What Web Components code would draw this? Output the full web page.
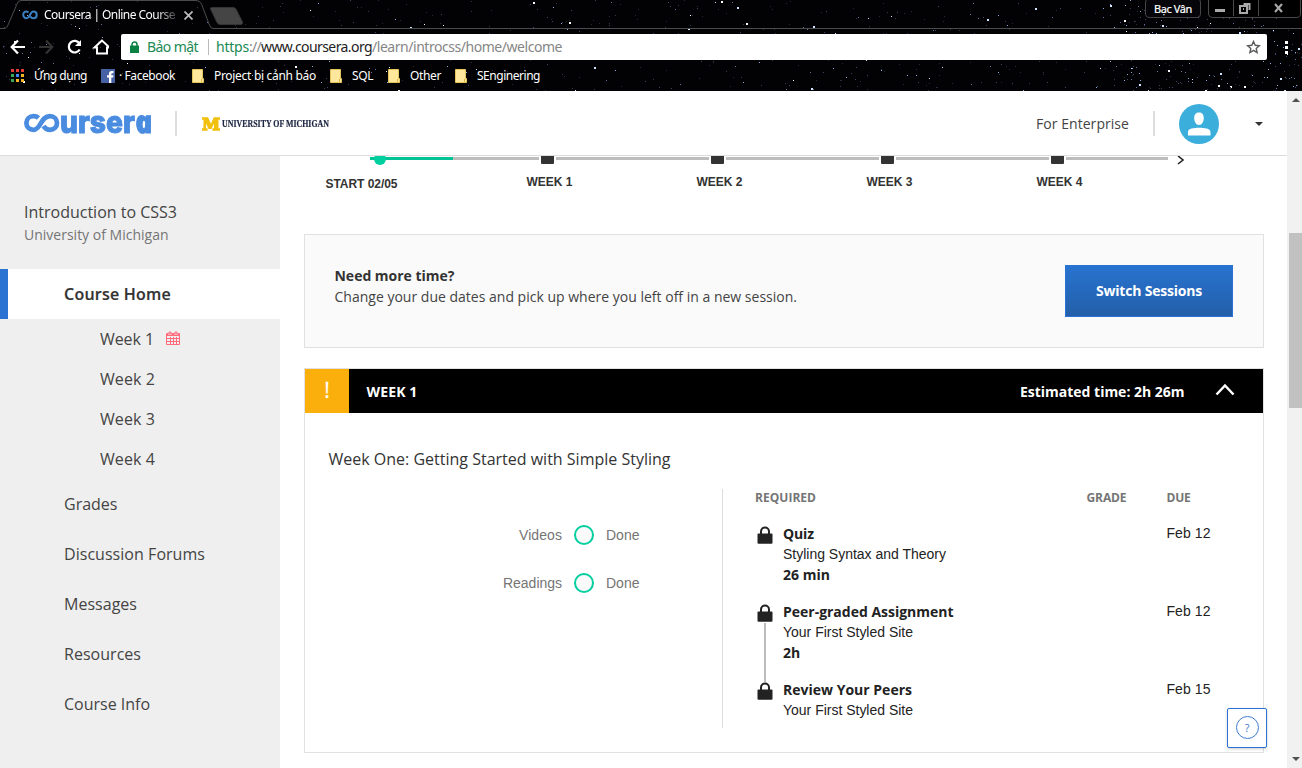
<!DOCTYPE html>
<html lang="vi"><head><meta charset="utf-8"><title>Coursera | Online Courses</title>
<style>
html,body{margin:0;height:100%;overflow:hidden;background:#fff}
body{font-family:"Open Sans","Noto Sans",sans-serif;color:#333}
</style></head><body>
<course-app></course-app>
<script>
function el(name, html, init){
  const t=document.createElement('template'); t.innerHTML=html;
  customElements.define(name, class extends HTMLElement{
    constructor(){super();this.attachShadow({mode:'open'}).append(t.content.cloneNode(true));}
    connectedCallback(){ if(init&&!this.ready){this.ready=true;init.call(this,this.shadowRoot);} }
  });
}
el('course-app', `<style>
:host{display:grid;grid-template-rows:91px 65px 612px;grid-template-columns:280px 1007px 15px;width:1302px;height:768px}
browser-chrome{grid-column:1/4}
site-header{grid-column:1/3}
scroll-rail{grid-column:3;grid-row:2/4}
main{height:612px;overflow:hidden;display:flex;flex-direction:column}
session-notice{margin:0 23px 20px 24px}week-card{margin:0 23px 0 24px}
help-button{position:absolute;left:1227px;top:708px}
</style>
<browser-chrome></browser-chrome><site-header></site-header><scroll-rail></scroll-rail>
<course-sidebar></course-sidebar>
<main><progress-timeline></progress-timeline><session-notice></session-notice><week-card></week-card></main>
<help-button></help-button>`);

el('browser-chrome', `<style>
:host{display:grid;grid-template:91px/1302px;background:#020204;color:#fff;overflow:hidden}
star-field,.rows{grid-area:1/1}
.rows{display:grid;grid-template-rows:29px 37px 25px;z-index:1}
</style><star-field></star-field><div class="rows"><tab-strip></tab-strip><address-row></address-row><bookmark-bar></bookmark-bar></div>`);

el('star-field', `<style>:host,svg{display:block;width:1302px;height:91px}</style><svg viewBox="0 0 1302 91" shape-rendering="crispEdges"></svg>`, function(r){
  let s=20117; const n=()=>(s=(s*1103515245+12345)%2147483648)/2147483648;
  const c=['#26283c','#34384c','#3f4668','#6274a0','#8fabdc','#cfe4ff','#ffffff']; let o='';
  for(let i=0;i<900;i++){
    const right=n()<.36, x=right?1110+Math.floor(n()*192):Math.floor(n()*1130), y=Math.floor(n()*91);
    const k=Math.floor(n()*(right?.4+n()*.6:n())*8), h=k>4&&n()<.5?2:1;
    o+='<rect x="'+x+'" y="'+y+'" width="'+h+'" height="'+h+'" fill="'+c[Math.min(k,6)]+'"/>';
  }
  r.querySelector('svg').innerHTML=o;
});

el('tab-strip', `<style>
:host{display:grid;grid-template:29px/1302px;font:12px "Noto Sans","Open Sans",sans-serif}
svg{display:block}.bg,.row{grid-area:1/1}
.row{display:flex;height:29px}
.mark{margin:9px 0 0 22px}
.t{margin:6px 0 0 6px;line-height:17px;width:131px;-webkit-mask:linear-gradient(90deg,#000 112px,#0004)}
.x{margin:11px 0 0 9px}
.user{margin:-2px 0 0 952px;width:54px;height:18px;border:1px solid #444;border-radius:4px;display:flex;justify-content:center;line-height:20px;box-sizing:content-box;font-size:11px;background:#05050a;color:#fff;-webkit-text-stroke:.2px #fff}
.win{margin-left:7px}
</style>
<svg class="bg" width="1302" height="29" fill="none" stroke="#4a4c4c"><path d="M0 28.500H5Q7 28 8 25L17 4Q18 .5 21 .5H196Q200 .5 201.500 4L209 24Q210.500 28.500 213 28.500H1302"/><path d="M211.500 7.500H233Q235 7.500 236 9L242.500 22Q243 24.500 241 24.500H220Q218 24.500 217 22.500L210.500 9Q210 7.500 211.500 7.500Z" fill="#454545" stroke="#333"/></svg>
<div class="row">
<svg class="mark" width="16" height="12" fill="none" stroke="#3c80c2" stroke-width="2"><path d="M6.500 3.400C3.500 1.300 1.200 3.300 1.200 5.800C1.200 8.500 4 10.300 6.500 8.300C8.500 6.500 8.500 2.500 11.300 2.500C13.500 2.500 14.700 4 14.700 5.900C14.700 8 13.200 9.300 11.300 9.300C10 9.300 9 8.600 8.500 7.500"/></svg>
<fit-text class="t" w="131">Coursera | Online Course</fit-text>
<svg class="x" width="9" height="9" stroke="#bbb" stroke-width="1.700"><path d="M.5 .5l8 8M8.500 .5l-8 8"/></svg>
<div class="user"><fit-text w="38">Bạc Vân</fit-text></div>
<svg class="win" width="94" height="18" fill="none" stroke="#4a4a4a"><path fill="#000" d="M.5 0V14Q1 17.500 4.500 17.500H88Q92.500 17.500 92.500 14V0M25.500 0V16M50.500 0V16"/><path stroke="#aaa" stroke-width="3" d="M7 10.500H17"/><path stroke="#aaa" stroke-width="2" d="M32 6h7v7h-7zM35.500 4H41.500V10M35 9h1"/><path stroke="#aaa" stroke-width="2" d="M67 4l7 8M74 4l-7 8"/></svg>
</div>`);

el('address-row', `<style>
:host{display:flex;height:37px;padding-top:5px;box-sizing:border-box;font:14px "Noto Sans","Open Sans",sans-serif}
svg{display:block;flex:none}
.nav{margin-right:12px}
.box{display:flex;width:1146px;height:26px;background:#fff;border-radius:2px;line-height:26px;color:#868686}
.box>*{flex:none}
.lock{margin:7px 0 0 9px}.safe{margin-left:8px;color:#218a54}.sep{width:1px;height:16px;background:#bbb;margin:5px 7px 0 10px}
.g{color:#218a54}.k{color:#222}.star{margin:6px 0 0 684px}.dots{margin:7px 0 0 18px}
</style>
<svg class="nav" width="109" height="26" fill="none" stroke="#fff" stroke-width="2.200"><path d="M25 13H12M18 6.500L11.700 13L18 19.500"/><path stroke="#333" d="M39 13H52M46 6.500L52.300 13L46 19.500"/><path d="M79.500 9.500A5.800 5.800 0 1 0 79.700 15.500"/><path d="M81 6V12H75Z" fill="#fff" stroke="none"/><path d="M102 6.500L94.500 13.500H97V19.500H107V13.500H109.500L102 6.500Z" stroke-width="2"/></svg>
<div class="box">
<svg class="lock" width="9" height="12"><path d="M2 5V3.500a2.500 2.500 0 0 1 5 0V5" fill="none" stroke="#0b8043" stroke-width="1.500"/><path fill="#0b8043" d="M0 4.500h9V12H0z"/></svg>
<fit-text class="safe" w="51">Bảo mật</fit-text><span class="sep"></span>
<fit-text class="g" w="33">https</fit-text><fit-text w="12">://</fit-text><fit-text class="k" w="111">www.coursera.org</fit-text><fit-text w="190">/learn/introcss/home/welcome</fit-text>
<svg class="star" width="15" height="14" fill="none" stroke="#5a5a5a" stroke-width="1.400"><path d="M7.500 1.500L9.200 5.300L13.300 5.700L10.200 8.400L11.100 12.500L7.500 10.400L3.900 12.500L4.800 8.400L1.700 5.700L5.800 5.300Z"/></svg>
</div>
<svg class="dots" width="4" height="14" fill="#fff"><path d="M0 0h3v3H0zM0 5h3v3H0zM0 10h3v3H0z"/></svg>`);

el('bookmark-bar', `<style>:host{display:flex;height:25px;padding-left:11px;font:12px/20px "Noto Sans","Open Sans",sans-serif}</style>
<book-mark kind="apps" w="53" gap="10" end="14">Ứng dụng</book-mark>
<book-mark kind="fb" w="56" gap="4" end="17">· Facebook</book-mark>
<book-mark kind="folder" w="102" gap="10" end="14">Project bị cảnh báo</book-mark>
<book-mark kind="folder" w="21" gap="10" end="15">SQL</book-mark>
<book-mark kind="folder" w="31" gap="10" end="14">Other</book-mark>
<book-mark kind="folder" w="63" gap="10" end="0">SEnginering</book-mark>`);
const icons={
 apps:'<svg width="13" height="14"><path fill="#e53b35" d="M0 0h3v3H0zM5 0h3v3H5zM10 0h3v3h-3z"/><path fill="#37a853" d="M0 5h3v3H0zM0 10h3v3H0z"/><path fill="#3f8bf5" d="M5 5h3v3H5z"/><path fill="#f6b425" d="M10 5h3v3h-3zM5 10h3v3H5zM10 10h3v3h-3z"/></svg>',
 fb:'<svg width="14" height="14"><path fill="#4662a5" d="M0 0h14v14H0z"/><path fill="#fff" d="M8 14V8.500H6V6.300H8V4.700Q8 2 10.700 2H12.500V4.200H11.300Q10.300 4.200 10.300 5.200V6.300H12.500L12.200 8.500H10.300V14Z"/></svg>',
 folder:'<svg width="12" height="14"><path fill="#ffe79b" stroke="#e6c65c" d="M.5 .5h10v9h1v4H.5z"/><path fill="none" stroke="#d8b748" d="M9.500 10v3"/></svg>'};
el('book-mark', `<style>:host{display:flex;color:#fff;flex:none}.i{margin-top:3px}.i svg{display:block}</style><span class="i"></span><fit-text><slot></slot></fit-text>`, function(r){
  r.querySelector('.i').innerHTML=icons[this.getAttribute('kind')];
  const f=r.querySelector('fit-text'); f.setAttribute('w',this.getAttribute('w')); f.setAttribute('chars',this.textContent.length);
  f.style.marginLeft=this.getAttribute('gap')+'px'; this.style.marginRight=this.getAttribute('end')+'px';
});

el('site-header', `<style>
:host{display:flex;height:64px;border-bottom:1px solid #ddd;background:#fff;align-items:center}
:host>*{flex:none}svg{display:block}
.logo{display:flex;margin-left:24px;width:127px;color:#4a8ce0;height:64px}
.logo svg{margin-top:22px;width:36px;flex:none}
.word{font:800 31px/60px Inter,sans-serif;height:60px;-webkit-text-stroke:1px #4a8ce0;margin-top:-.5px}
.word span{display:inline-block;font:italic 800 31px/60px "Open Sans",sans-serif;transform:skewX(12deg);vertical-align:baseline}
.d{width:2px;height:25px;background:#ddd}
.m{font:bold 17px/20px "DejaVu Serif",serif;color:#f2c10f;-webkit-text-stroke:1.500px #f2c10f;margin:1px 0 0 25px}
.u{font:bold 9.300px/20px "Liberation Serif",serif;color:#1b2440;-webkit-text-stroke:.2px #1b2440;margin:1px 0 0 2px}
.e{margin:0 24px 0 707px;font-size:14px;color:#444}
.av{margin:2px 0 0 24px}.c{margin:2px 0 0 36px}
</style>
<div class="logo"><svg height="20" viewBox="0 0 36 20" fill="none" stroke="#4a8ce0" stroke-width="4.800"><path d="M14.500 5C13 3.600 11 3.200 9.500 3.200C5.500 3.200 2.400 6.200 2.400 10C2.400 13.800 5.500 16.800 9.500 16.800C17 16.800 16.500 3.200 26 3.200C30 3.200 33 6.200 33 10C33 13.800 30 16.800 26 16.800C23 16.800 21 15.500 19.500 13"/></svg><fit-text class="word" squash w="92">urser<span>a</span></fit-text></div>
<span class="d" style="margin-left:24px"></span>
<fit-text class="m" squash w="18">M</fit-text><fit-text class="u" squash w="107">UNIVERSITY OF MICHIGAN</fit-text>
<fit-text class="e" w="93">For Enterprise</fit-text><span class="d"></span>
<svg class="av" width="40" height="40"><circle cx="20" cy="20" r="20" fill="#3caedb"/><path fill="#fff" d="M20 8.500C23 8.500 24.800 10.500 24.800 14C24.800 17.500 23 21 20 21S15.200 17.500 15.200 14C15.200 10.500 17 8.500 20 8.500ZM9 31.500V28C9 24.500 15 23.800 20 23.800S31.500 24.500 31.500 28V31.500Z"/></svg>
<svg class="c" width="8" height="4"><path d="M0 0h8L4 4z" fill="#333"/></svg>`);

el('scroll-rail', `<style>:host{display:flex;flex-direction:column;align-items:center;background:#f1f1f1;width:15px;height:677px}
svg{display:block}i{width:13px;height:175px;background:#c1c1c1;margin:125px 0 342px 2px}svg{margin-left:2px}</style>
<svg width="8" height="17"><path d="M0 11l4-4 4 4z" fill="#505050"/></svg><i></i><svg width="8" height="17"><path d="M0 7h8l-4 4z" fill="#505050"/></svg>`);

el('course-sidebar', `<style>
:host{display:block;background:#efefef;width:280px;height:612px;overflow:hidden;color:#444}
header{height:113px;padding:44px 0 0 24px;box-sizing:border-box;font-size:16px;line-height:24px}
header fit-text{display:block}.s{font-size:14px;line-height:22px;color:#757575}
</style><header><fit-text w="153">Introduction to CSS3</fit-text><fit-text class="s" w="144.5">University of Michigan</fit-text></header>
<nav><nav-item active w="107">Course Home</nav-item>
<nav-item sub due w="54">Week 1</nav-item><nav-item sub w="55">Week 2</nav-item><nav-item sub w="55">Week 3</nav-item><nav-item sub w="55">Week 4</nav-item>
<nav-item w="53.5">Grades</nav-item><nav-item w="141">Discussion Forums</nav-item><nav-item w="73">Messages</nav-item><nav-item w="77">Resources</nav-item><nav-item w="86">Course Info</nav-item></nav>`);
el('nav-item', `<style>
:host{display:flex;height:50px;line-height:50px;padding-left:64px;box-sizing:border-box;font-size:16px;color:#444}
:host([sub]){height:40px;line-height:40px;padding-left:100px}
:host([active]){background:#fff;border-left:8px solid #2a73d2;padding-left:56px;font-weight:600;color:#333;-webkit-text-stroke:.2px #333}
svg{display:none;margin:12px 0 0 12px}:host([due]) svg{display:block}
</style><fit-text><slot></slot></fit-text><svg width="14" height="15" fill="none" stroke="#ff6b7a"><path d="M.5 2.500h13v11H.5z"/><path d="M1 3.500h12" stroke-width="3"/><path d="M4.500 6v8M7.500 6v8M10.500 6v8M1 7.500h12M1 10.500h12"/><path d="M4 0v4M10 0v4" stroke="#efefef" stroke-width="3"/><path d="M3 3V1h2v2zM9 3V1h2v2z"/></svg>`, function(r){
  const f=r.querySelector('fit-text'); f.setAttribute('w',this.getAttribute('w')); f.setAttribute('chars',this.textContent.length);
});

el('progress-timeline', `<style>
:host{display:block;height:78px;flex:none}
.bar{display:flex;height:9px;padding-left:90px;align-items:flex-start}
.bar>*{flex:none;height:3px;margin-top:1px;background:#bdbdbd}
.bar .go{width:83px;background:#00c495;position:relative}.go:after{content:"";position:absolute;left:4px;top:-4px;width:12px;height:12px;border-radius:50%;background:#00cfa0}
.bar .sq{width:13px;height:8px;margin:0 2px;background:#333;border-radius:0 0 1px 1px}
.bar svg{background:none;height:10px;margin:-1px 0 0 8px}
.l{display:flex;font:bold 12px/16px "Liberation Sans",Arial,sans-serif;padding:9px 0 0 45.500px;color:#333}
.l fit-text{margin-right:124px}.l .st{margin:2px 129px 0 0}
</style><div class="bar"><i class="go"></i><i style="width:86px"></i><i class="sq"></i><i style="width:153px"></i><i class="sq"></i><i style="width:153px"></i><i class="sq"></i><i style="width:153px"></i><i class="sq"></i><i style="width:102px"></i><svg width="10" height="10"><path d="M2 1l5 4-5 4" fill="none" stroke="#222" stroke-width="1.600"/></svg></div>
<div class="l"><fit-text class="st" w="72">START 02/05</fit-text><fit-text w="46">WEEK 1</fit-text><fit-text w="46">WEEK 2</fit-text><fit-text w="46">WEEK 3</fit-text><fit-text w="46">WEEK 4</fit-text></div>`);

el('session-notice', `<style>
:host{display:flex;justify-content:space-between;height:114px;flex:none;box-sizing:border-box;border:1px solid #e1e1e1;background:#fafafa;padding:30px 30px 0 29.500px;font-size:14px;line-height:21px;color:#444}
fit-text{display:block}b{display:block;color:#333;font-weight:700}
button{font:700 14px/50px "Open Sans",sans-serif;color:#fff;width:168px;height:52px;padding:0 0 0 30px;border:1px solid #2a73d2;background:linear-gradient(#2873d0,#235fa9);text-align:left;box-sizing:border-box}
</style><div><b><fit-text w="120">Need more time?</fit-text></b><fit-text w="462.5">Change your due dates and pick up where you left off in a new session.</fit-text></div>
<button><fit-text w="106">Switch Sessions</fit-text></button>`);

el('week-card', `<style>
:host{display:block;height:385px;box-sizing:border-box;border:1px solid #e1e1e1;flex:none;background:#fff}
.bar{display:flex;height:44px;line-height:45px;background:#000;color:#fff;font-weight:700;font-size:14px}
.w{width:44px;background:#faaf0c;text-align:center;font:400 21px/43px "Open Sans",sans-serif;-webkit-text-stroke:.3px #fff;margin-right:17.500px}
.est{margin-left:602.500px}.bar svg{margin:14px 0 0 30px}
h2{font-weight:400;font-size:16px;line-height:24px;margin:34px 0 18px 23.500px;color:#333}
.cols{display:flex;height:239px}
.prog{width:417px;border-right:1px solid #ddd;padding-top:34px;box-sizing:content-box}
.list{padding:0 0 0 32px}
.head{display:flex;font-size:12px;font-weight:700;line-height:17px;color:#757575;height:35px}
</style>
<div class="bar"><span class="w">!</span><fit-text w="51">WEEK 1</fit-text><fit-text class="est" w="164.5">Estimated time: 2h 26m</fit-text><svg width="20" height="13" fill="none" stroke="#fff" stroke-width="2.500"><path d="M1.500 11.500L10 2.500L18.500 11.500"/></svg></div>
<h2><fit-text w="342">Week One: Getting Started with Simple Styling</fit-text></h2>
<div class="cols"><div class="prog"><status-row w="43">Videos</status-row><status-row w="59">Readings</status-row></div>
<div class="list"><div class="head"><fit-text w="61">REQUIRED</fit-text><fit-text w="40" style="margin:0 40px 0 270.5px">GRADE</fit-text><fit-text w="24">DUE</fit-text></div>
<task-item due="Feb 12" time="26 min" tw="47" nw="31" sw="163" sub="Styling Syntax and Theory">Quiz</task-item>
<task-item linked due="Feb 12" time="2h" tw="17" nw="170.5" sw="130" sub="Your First Styled Site">Peer-graded Assignment</task-item>
<task-item due="Feb 15" time="" nw="129" sw="130" sub="Your First Styled Site">Review Your Peers</task-item></div></div>`);

el('status-row', `<style>:host{display:flex;height:24px;margin-bottom:24px;font:14px/24px "Liberation Sans",Arial,sans-serif;color:#757575}
.n{display:flex;justify-content:flex-end;width:257px}i{box-sizing:border-box;width:20px;height:20px;border:2px solid #00cfa0;border-radius:50%;background:#fafafa;margin:2px 12px 0}</style>
<span class="n"><fit-text><slot></slot></fit-text></span><i></i><fit-text w="33.5">Done</fit-text>`, function(r){
  const f=r.querySelector('.n fit-text'); f.setAttribute('w',this.getAttribute('w')); f.setAttribute('chars',this.textContent.length);
});

el('task-item', `<style>
:host{display:flex;height:78px;font:14px/20px "Liberation Sans",Arial,sans-serif;color:#222}
.i{width:28px;padding:2px 0 0 2px;box-sizing:border-box;flex:none}.i svg{display:block}
:host([linked]) .i:after{content:"";display:block;width:2px;height:59px;margin:1px 0 0 7px;background:#bdbdbd}
.b{width:384px;flex:none}.b fit-text{display:block}.d{margin:-1px 0 0 -.5px}
.n,.t{font:700 14px/20px "Open Sans",sans-serif}.t{line-height:22px}
</style><span class="i"><svg width="16" height="18"><path d="M4 8V5.500a4 4 0 0 1 8 0V8" fill="none" stroke="#222" stroke-width="2"/><rect x=".5" y="7.500" width="15" height="10.200" rx="1" fill="#222"/></svg></span>
<div class="b"><fit-text class="n"><slot></slot></fit-text><fit-text class="s"></fit-text><fit-text class="t"></fit-text></div><fit-text class="d" w="44"></fit-text>`, function(r){
  const g=k=>this.getAttribute(k), q=s=>r.querySelector(s);
  q('.n').setAttribute('w',g('nw')); q('.n').setAttribute('chars',this.textContent.length);
  q('.s').textContent=g('sub'); q('.s').setAttribute('w',g('sw'));
  if(g('time')){q('.t').textContent=g('time'); q('.t').setAttribute('w',g('tw'));} else q('.t').remove();
  q('.d').textContent=g('due');
});

el('help-button', `<style>:host{display:flex;width:40px;height:40px;box-sizing:border-box;border:1px solid #2a73d2;border-radius:2px;background:#fff;align-items:center;justify-content:center;box-shadow:0 1px 3px #0003}
span{width:21px;height:21px;margin-top:-1px;border:1px solid #3f7dd0;border-radius:50%;font:11px/21px "Open Sans",sans-serif;color:#3f7dd0;text-align:center}</style><span>?</span>`);

/* Sets its text to a fixed advance width, by tracking or by horizontal scale. */
el('fit-text', `<style>:host{display:inline-block;white-space:nowrap}span{display:inline-block;transform-origin:0 50%;vertical-align:top}</style><span><slot></slot></span>`, function(r){
  const w=+this.getAttribute('w'), s=r.querySelector('span'), nat=s.getBoundingClientRect().width;
  const n=+this.getAttribute('chars')||this.textContent.length;
  this.style.width=w+'px';
  if(!nat||!w) return;
  if(this.hasAttribute('squash')) s.style.transform='scaleX('+w/nat+')';
  else s.style.letterSpacing=((w-nat)/n)+'px';
});
</script></body></html>
